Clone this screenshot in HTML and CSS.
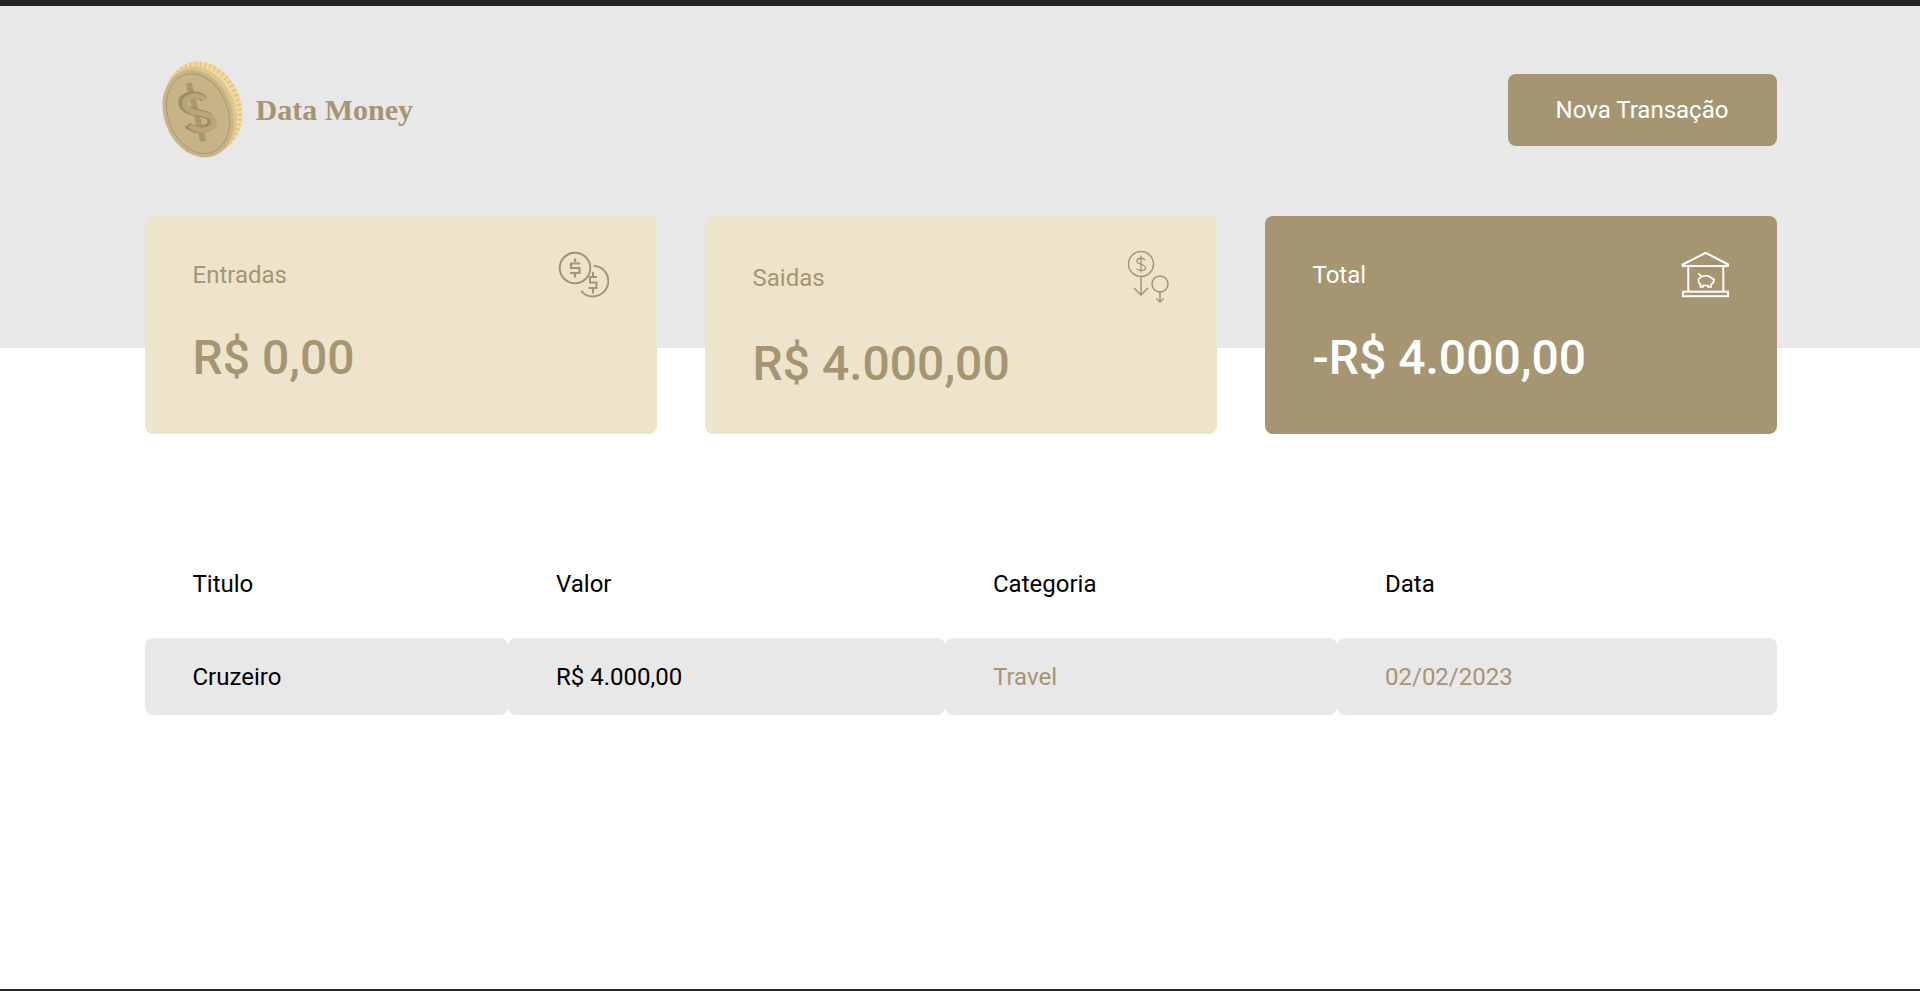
FILE: index.html
```html
<!DOCTYPE html>
<html lang="pt-BR">
<head>
    <meta charset="UTF-8">
    <meta name="viewport" content="width=device-width, initial-scale=1.0">
    <title>Data Money</title>
    <link rel="stylesheet" href="styles.css">
</head>
<body>

    <header class="header">
        <div class="header-content">
            <div class="logo">
                <svg class="logo-coin" width="90" height="104" viewBox="0 0 90 104">
                    <g transform="rotate(-21 42 52)">
                        <ellipse cx="45" cy="50" rx="37" ry="47" fill="#f2da9c"/>
                        <ellipse cx="45" cy="50" rx="34" ry="44" fill="none" stroke="#d8bf85" stroke-width="5" stroke-dasharray="1.3 3.6"/>
                        <ellipse cx="40" cy="52.5" rx="35" ry="46" fill="#dcc68e"/>
                        <ellipse cx="37" cy="54" rx="34" ry="45" fill="#c6b486"/>
                        <ellipse cx="37" cy="54" rx="30" ry="41" fill="none" stroke="#ab9a70" stroke-width="1"/>
                    </g>
                    <g transform="translate(37 54) rotate(-14) skewY(8)" fill="none">
                        <path d="M-1 -30 V30" stroke="#a8986e" stroke-width="6"/>
                        <path d="M10 -12 C6 -20 -12 -19 -12 -9 C-12 2 12 -1 12 10 C12 20 -8 20 -12 12" stroke="#9d8d65" stroke-width="8"/>
                        <path d="M11 -11 C7 -19 -10 -18 -10 -8 C-10 3 14 0 14 11 C14 21 -6 21 -10 13" stroke="#b7a679" stroke-width="5.5"/>
                    </g>
                </svg>
                <span class="logo-text">Data Money</span>
            </div>
            <button class="new-transaction" type="button">Nova Transação</button>
        </div>
    </header>

    <main class="content">
        <section class="summary">
            <div class="card">
                <div class="card-top">
                    <span>Entradas</span>
                    <svg class="icon" width="54" height="54" viewBox="0 0 54 54" fill="none" stroke="currentColor" stroke-width="2">
                        <circle cx="20" cy="20" r="15.3"/>
                        <path d="M25 15.5 H16 V20 H24.5 V25 H15 M20 10.5 V14 M20 26 V29.5" stroke-width="2.2"/>
                        <path d="M38.7 17.8 A15.3 15.3 0 1 1 26.2 42.8"/>
                        <path d="M38 24 V28 M42 29 H35 V34.5 H41.5 V40 H33.5 M38 41 V45.5" stroke-width="2"/>
                    </svg>
                </div>
                <strong class="card-value">R$ 0,00</strong>
            </div>
            <div class="card">
                <div class="card-top">
                    <span>Saidas</span>
                    <svg class="icon" width="60" height="60" viewBox="0 0 60 60" fill="none" stroke="currentColor" stroke-width="1.5">
                        <circle cx="32" cy="16" r="12.5"/>
                        <path d="M36 12 C34.5 9.5 28 9.5 28 13 C28 17 36.5 15.5 36.5 20 C36.5 23 29.5 23.5 27.5 20.5 M32 7.5 V24.5" stroke-width="1.3"/>
                        <path d="M32 28.5 V47 M25 40 L32 47 L39 40"/>
                        <circle cx="51" cy="36" r="8"/>
                        <path d="M51 44 V54 M47.5 50.5 L51 54 L54.5 50.5"/>
                    </svg>
                </div>
                <strong class="card-value">R$ 4.000,00</strong>
            </div>
            <div class="card card-total">
                <div class="card-top">
                    <span>Total</span>
                    <svg class="icon" width="54" height="54" viewBox="-2 0 54 54" fill="none" stroke="currentColor" stroke-width="2">
                        <path d="M28.7 4.8 L5.7 16.5 V18 H51.3 V16.5 Z" stroke-linejoin="round"/>
                        <path d="M11.3 18 V43.7 M46.3 18 V43.7"/>
                        <rect x="6" y="43.7" width="45" height="4.5"/>
                        <path d="M25 28.5 A8 7 0 0 1 35 30.5 L37 31.5 L36.5 34.5 L34 36.5 V39 H31 V37.5 H26 V39 H23.5 V36.5 A6 6 0 0 1 21.5 31" stroke-width="1.7"/>
                        <path d="M21 25.5 L25 28.5 L21.5 31" stroke-width="1.7"/>
                    </svg>
                </div>
                <strong class="card-value">-R$ 4.000,00</strong>
            </div>
        </section>

        <table class="transactions">
            <thead>
                <tr>
                    <th class="col-title">Titulo</th>
                    <th class="col-value">Valor</th>
                    <th class="col-category">Categoria</th>
                    <th class="col-date">Data</th>
                </tr>
            </thead>
            <tbody>
                <tr>
                    <td>Cruzeiro</td>
                    <td>R$ 4.000,00</td>
                    <td class="muted">Travel</td>
                    <td class="muted">02/02/2023</td>
                </tr>
            </tbody>
        </table>
    </main>

</body>
</html>
```

FILE: styles.css
```css
* {
    box-sizing: border-box;
}
body {
    margin: 0;
    height: 991px;
    overflow: hidden;
    font-family: Roboto, Arial, sans-serif;
    font-size: 24px;
    color: #000;
    background: #fff;
    border-top: 6px solid #212529;
    border-bottom: 2px solid #212529;
}
.header {
    height: 342px;
    background: #e8e8e8;
}
.header-content {
    display: flex;
    justify-content: space-between;
    align-items: center;
    width: 1632px;
    margin-left: 144.5px;
    padding-top: 52px;
}
.logo {
    display: flex;
    align-items: center;
    gap: 6px;
    padding-left: 15px;
}
.logo-text {
    font-family: "Liberation Serif", "Times New Roman", serif;
    font-size: 30px;
    font-weight: 700;
    color: #a59571;
}
.new-transaction {
    width: 269px;
    height: 72px;
    border: none;
    border-radius: 8px;
    background: #a59571;
    color: #fff;
    font-family: inherit;
    font-size: 24px;
    cursor: pointer;
}
.content {
    width: 1632px;
    margin-left: 144.5px;
    margin-top: -132px;
}
.summary {
    display: grid;
    grid-template-columns: repeat(3, 512px);
    gap: 48px;
}
.card {
    height: 218px;
    padding: 32px 48px;
    border-radius: 8px;
    background: #eee4cc;
    color: #a59571;
}
.card-top {
    display: flex;
    justify-content: space-between;
    align-items: center;
}
.icon {
    display: block;
}
.card-value {
    display: block;
    margin-top: 28px;
    font-size: 48px;
    font-weight: 500;
    line-height: 56px;
}
.card-total {
    background: #a59571;
    color: #fff;
}
.transactions {
    width: 1632px;
    margin-top: 96px;
    border-collapse: collapse;
    table-layout: fixed;
}
.col-title {
    width: 363.5px;
}
.col-value {
    width: 437px;
}
.col-category {
    width: 392px;
}
.transactions th {
    height: 108px;
    padding: 0 48px;
    font-weight: 400;
    text-align: left;
}
.transactions td {
    height: 77px;
    padding: 0 48px;
    background: #e8e8e8;
    border-radius: 8px;
}
.muted {
    color: #a59571;
}
```
